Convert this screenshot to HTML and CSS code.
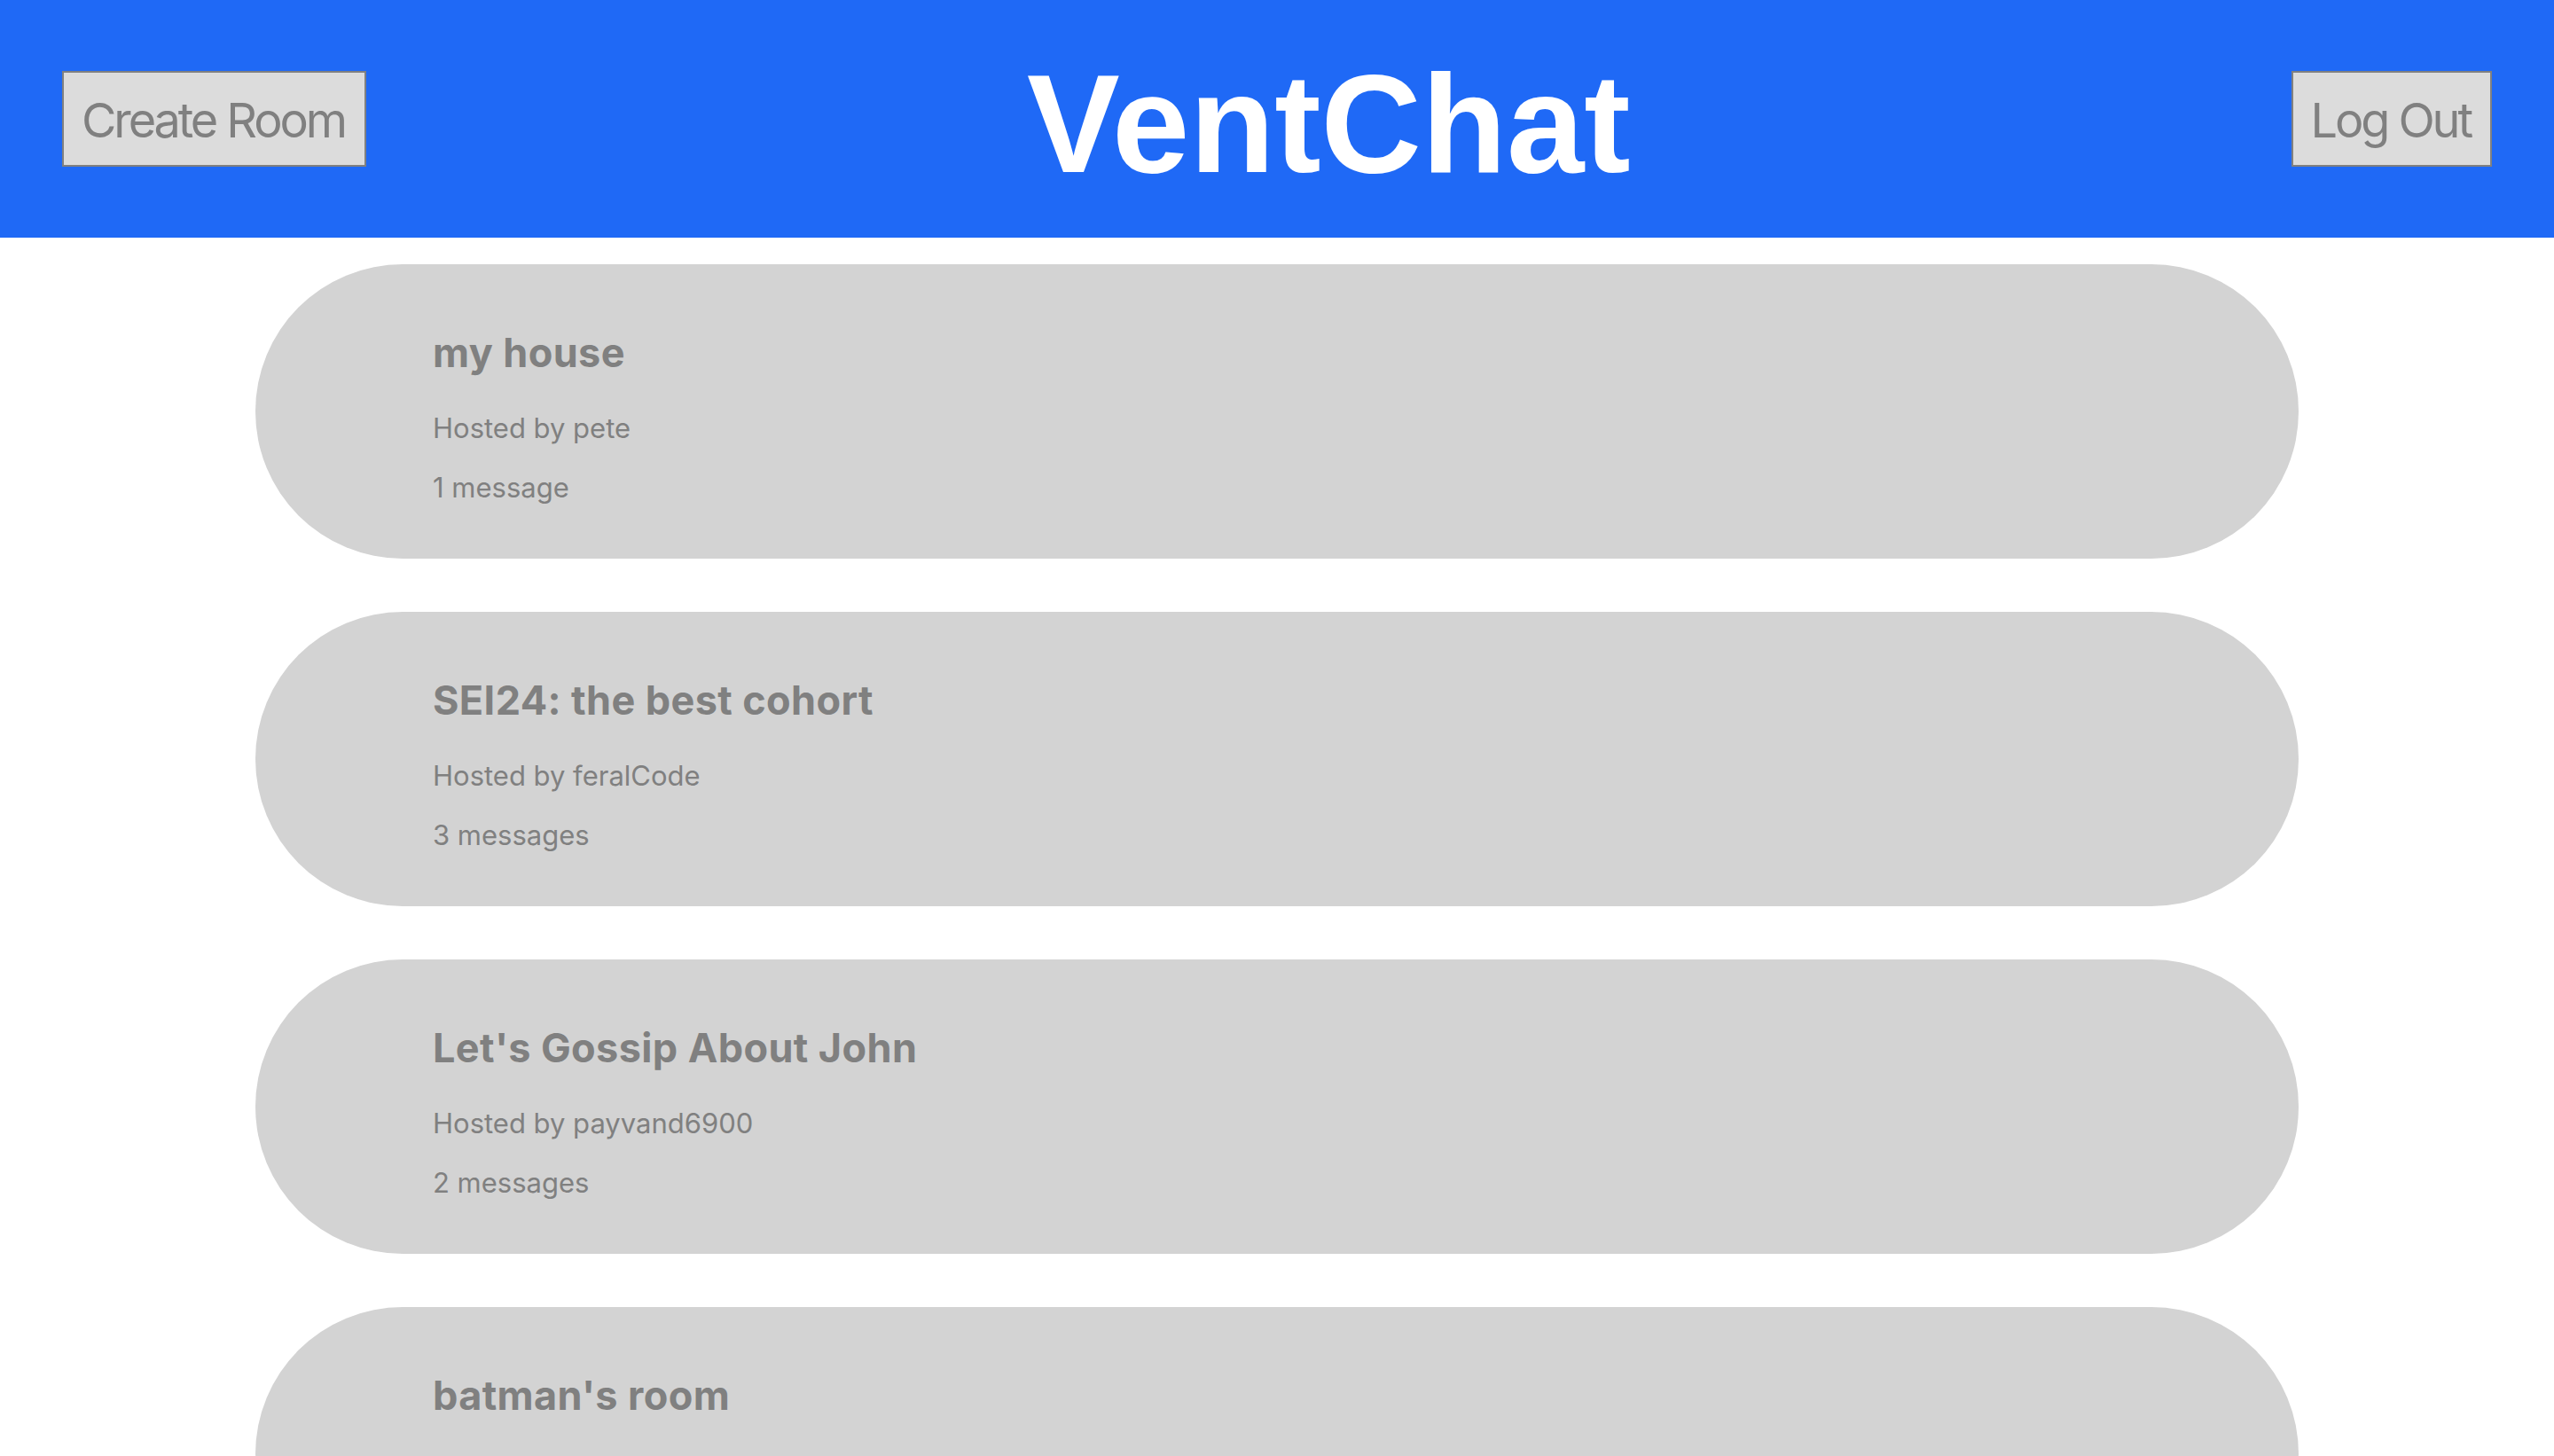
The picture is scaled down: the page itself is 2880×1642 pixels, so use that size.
FILE: index.html
```html
<!DOCTYPE html>
<html lang="en">
<head>
<meta charset="utf-8">
<title>VentChat</title>
<link rel="stylesheet" href="styles.css">
</head>
<body>
<header class="topbar">
  <button class="btn">Create Room</button>
  <h1 class="brand">VentChat</h1>
  <button class="btn">Log Out</button>
</header>
<main class="rooms">
  <section class="room">
    <h2 class="room-title">my house</h2>
    <p class="room-meta">Hosted by pete</p>
    <p class="room-meta">1 message</p>
  </section>
  <section class="room">
    <h2 class="room-title">SEI24: the best cohort</h2>
    <p class="room-meta">Hosted by feralCode</p>
    <p class="room-meta">3 messages</p>
  </section>
  <section class="room">
    <h2 class="room-title">Let's Gossip About John</h2>
    <p class="room-meta">Hosted by payvand6900</p>
    <p class="room-meta">2 messages</p>
  </section>
  <section class="room">
    <h2 class="room-title">batman's room</h2>
    <p class="room-meta">Hosted by batman</p>
    <p class="room-meta">1 message</p>
  </section>
</main>
</body>
</html>
```
FILE: styles.css
```css
html {
  scrollbar-width: none;
}
html::-webkit-scrollbar {
  display: none;
}
body {
  margin: 0;
  font-family: Inter, "Noto Sans", sans-serif;
  background: #ffffff;
}
.topbar {
  display: flex;
  justify-content: space-between;
  align-items: center;
  height: 268px;
  box-sizing: border-box;
  padding: 0 70px;
  background: #1f69f6;
}
.btn {
  font-family: Inter, "Noto Sans", sans-serif;
  font-size: 54px;
  line-height: 66px;
  letter-spacing: -3.1px;
  padding: 21px 22px 17px 20px;
  border: 2px solid #808080;
  background: #dcdcdc;
  color: #808080;
  border-radius: 0;
}
.brand {
  margin: 11px 0 0;
  font-family: "Liberation Sans", Arial, sans-serif;
  font-weight: 700;
  font-size: 157px;
  line-height: 1;
  color: #ffffff;
}
.rooms {
  display: flex;
  flex-direction: column;
  align-items: center;
  gap: 60px;
  padding-top: 30px;
}
.room {
  width: 2304px;
  height: 332px;
  box-sizing: border-box;
  padding: 72px 0 0 200px;
  background: #d3d3d3;
  border-radius: 166px;
  color: #808080;
}
.room-title {
  margin: 0 0 39px;
  font-size: 45px;
  font-weight: 700;
  letter-spacing: 0.4px;
  line-height: normal;
}
.room-meta {
  margin: 0;
  font-size: 31px;
  line-height: normal;
}
.room-meta + .room-meta {
  margin-top: 30px;
}
```
